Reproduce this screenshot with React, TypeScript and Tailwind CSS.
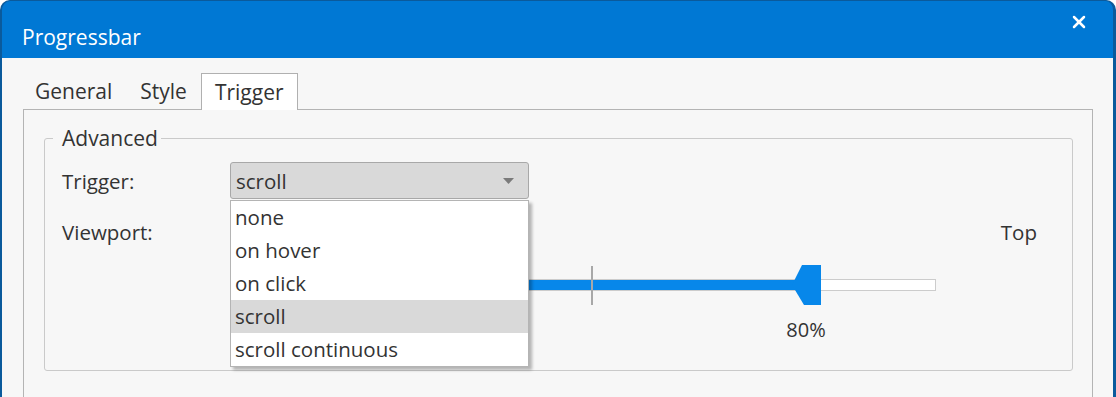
import { X } from "lucide-react";

const items = ["none", "on hover", "on click", "scroll", "scroll continuous"];

function Thumb() {
  return (
    <svg width="29" height="40" viewBox="0 0 29 40" className="block">
      <polygon points="10,0 29,0 29,40 12,40 0,20" fill="#0787ea" />
    </svg>
  );
}

function TriggerSelect() {
  return (
    <div className="relative w-[299px]">
      <div className="flex h-[37px] items-center justify-between rounded-[3px] border border-[#a8a8a8] bg-[#d9d9d9] pl-[5px] pr-[14px]">
        <span className="text-[20.5px] leading-[28px] text-[#333]">scroll</span>
        <svg width="11" height="6" viewBox="0 0 11 6">
          <polygon points="0,0 11,0 5.5,6" fill="#7a7a7a" />
        </svg>
      </div>
      {/* open list */}
      <ul className="absolute left-0 top-[38px] z-10 w-[299px] border border-[#b4b4b4] bg-white shadow-[3px_3px_3px_rgba(0,0,0,0.28)]">
        {items.map((it) => (
          <li
            key={it}
            className={
              "flex h-[33px] items-center px-[4px] pb-[2px] text-[20.5px] leading-[28px] text-[#333] " +
              (it === "scroll" ? "bg-[#d9d9d9]" : "")
            }
          >
            {it}
          </li>
        ))}
      </ul>
    </div>
  );
}

export default function App() {
  return (
    <div
      className="h-[397px] w-[1116px] overflow-hidden bg-white"
      style={{ fontFamily: '"Open Sans", "Noto Sans", sans-serif' }}
    >
      <div className="flex h-[420px] flex-col overflow-hidden rounded-t-[10px] border-x-2 border-t border-r-[3px] border-[#0a5a9c] bg-[#0078d4]">
        {/* title bar */}
        <div className="flex h-[57px] shrink-0 items-start justify-between pl-[20px] pr-[24px] text-white">
          <span className="mt-[26px] text-[21px] leading-none">Progressbar</span>
          <X size={20} strokeWidth={3} className="mt-[11px]" />
        </div>

        {/* body */}
        <div className="flex-1 bg-[#f7f7f7] pl-[21px] pr-[20px] pt-[15px]">
          <div className="flex h-[36px] items-end text-[21px] text-[#333]">
            <div className="flex h-[36px] items-center pl-[12px] pr-[15px] pt-[2px]">General</div>
            <div className="flex h-[36px] items-center pl-[13px] pr-[14px] pt-[2px]">Style</div>
            <div className="relative z-10 mb-[-1px] flex h-[37px] items-center border border-b-0 border-[#b0b0b0] bg-white px-[13px] pt-[1px]">
              Trigger
            </div>
          </div>

          <div className="h-[300px] border border-[#b4b4b4] bg-[#f7f7f7] pl-[20px] pr-[19px] pt-[16px]">
            <fieldset className="h-[245px] rounded-[3px] border border-[#cacaca] pl-[17px] pr-[20px]">
              <legend className="ml-[-9px] pl-[9px] pr-[3px] text-[21px] leading-[24px] text-[#333]">
                Advanced
              </legend>

              <div className="mt-[12px] flex items-center text-[20.5px] leading-[28px] text-[#333]">
                <span className="w-[168px]">Trigger:</span>
                <TriggerSelect />
              </div>

              <div className="mt-[19px] flex items-center justify-between text-[20.5px] leading-[28px] text-[#333]">
                <span>Viewport:</span>
                <span className="mr-[15px]">Top</span>
              </div>

              {/* slider */}
              <div className="relative ml-[224px] mt-[19px] h-[40px] w-[650px]">
                <div className="absolute left-0 right-0 top-[14px] h-[12px] border border-[#cccccc] bg-white">
                  <div className="h-full w-[80%] bg-[#0787ea]" />
                </div>
                <div className="absolute left-[305px] top-[1px] h-[39px] w-[2px] bg-[#a8a8a8]" />
                <div className="absolute left-[506px] top-0">
                  <Thumb />
                </div>
              </div>
              <div className="ml-[722px] mt-[11px] w-[44px] text-center text-[20px] leading-[28px] text-[#333]">
                80%
              </div>
            </fieldset>
          </div>
        </div>
      </div>
    </div>
  );
}
